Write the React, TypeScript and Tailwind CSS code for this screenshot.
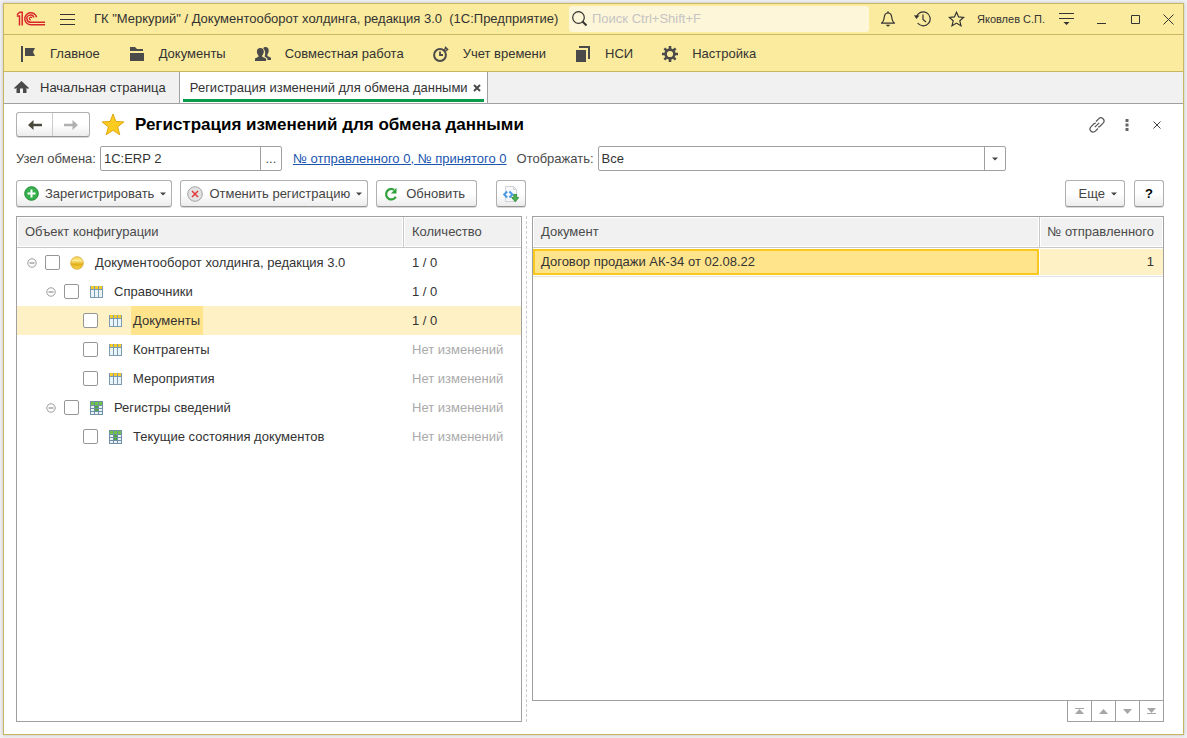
import { useState } from "react";
import type { ReactNode } from "react";

type TreeRow = {
  id: string;
  level: number;
  icon: "root" | "catalog" | "register";
  name: string;
  count: string;
};

const treeRows: TreeRow[] = [
  { id: "root", level: 0, icon: "root", name: "Документооборот холдинга, редакция 3.0", count: "1 / 0" },
  { id: "catalogs", level: 1, icon: "catalog", name: "Справочники", count: "1 / 0" },
  { id: "documents", level: 2, icon: "catalog", name: "Документы", count: "1 / 0" },
  { id: "partners", level: 2, icon: "catalog", name: "Контрагенты", count: "" },
  { id: "events", level: 2, icon: "catalog", name: "Мероприятия", count: "" },
  { id: "registers", level: 1, icon: "register", name: "Регистры сведений", count: "" },
  { id: "states", level: 2, icon: "register", name: "Текущие состояния документов", count: "" },
];

const indents = ["pl-[10px]", "pl-[29px]", "pl-[47px]"];

const buttonClass =
  "flex items-center rounded-[3px] border border-[#b0b0b0] border-b-[#959595] bg-linear-to-b from-white from-50% to-[#ececec] text-[#444] shadow-[0_1px_0_#d8d8d8]";

function Logo() {
  return (
    <svg width="30" height="16" viewBox="0 0 30 16" fill="none" stroke="#d9262c" strokeWidth="1.5">
      <path d="M.8 5H3.500v9.500M1 3.800 3.800 1.200h2.400v13.300" />
      <path d="M20.600 6.200A6 6 0 1 0 15 13.700h14" />
      <path d="M17.900 6.500a3.600 3.600 0 1 0-3.100 4.700H29" />
      <path d="M15.800 7a1.300 1.300 0 1 0-.9 1.800" strokeWidth="1.200" />
    </svg>
  );
}

function FlagIcon() {
  return (
    <svg width="16" height="16" viewBox="0 0 16 16" fill="#4a4a4a">
      <path d="M1 0h2v16H1zM5 2h10l-2 4 2 4H5z" />
    </svg>
  );
}

function FolderIcon() {
  return (
    <svg width="16" height="16" viewBox="0 0 16 16" fill="#4a4a4a">
      <path d="M1 1h5l2 2h6v2H1zM1 7h14v8H1z" />
    </svg>
  );
}

function PeopleIcon() {
  return (
    <svg width="16" height="16" viewBox="0 0 16 16" fill="#4a4a4a">
      <path d="M10.500 1c2.200 0 3.200 1.300 3.200 3.400 0 1.900-.6 3-1.300 3.900v1.600l3.600 1.800V14h-3.600v-1.800L9.600 10.500C10.600 8 10.500 4.500 8.200 2.300 8.700 1.500 9.500 1 10.500 1z" />
      <path d="M5.300 2C7.600 2 8.800 3.500 8.800 5.500c0 1.900-.8 3-1.600 3.900v1.300l3.900 1.900V15H0v-2.400l3.500-1.900V9.400C2.600 8.500 1.900 7.400 1.900 5.500 1.900 3.500 3.100 2 5.300 2z" />
    </svg>
  );
}

function TimerIcon() {
  return (
    <svg width="16" height="16" viewBox="0 0 16 16" fill="none" stroke="#4a4a4a" strokeWidth="2">
      <circle cx="7" cy="9" r="5.900" />
      <path d="M7 5.500V9h3" strokeWidth="1.800" />
      <path d="m12 .8 3.200 3.200M11 4l2.400-2.400M12.500 5.200l2-2" strokeWidth="1.400" />
    </svg>
  );
}

function BooksIcon() {
  return (
    <svg width="16" height="16" viewBox="0 0 16 16" fill="#4a4a4a">
      <path d="M1 4h10v12H1zM4 0h11v13h-2V2H4z" />
    </svg>
  );
}

function GearIcon() {
  return (
    <svg width="16" height="16" viewBox="0 0 16 16" fill="none" stroke="#4a4a4a">
      <circle cx="8" cy="8" r="4.400" strokeWidth="2.600" />
      <path d="M8 0v3M8 13v3M0 8h3M13 8h3M2.400 2.400l2 2M11.600 11.600l2 2M2.400 13.600l2-2M11.600 4.400l2-2" strokeWidth="2.600" />
    </svg>
  );
}

function HomeIcon() {
  return (
    <svg width="15" height="13" viewBox="0 0 15 13" fill="#4a4a4a">
      <path d="M7.500 0 15 7l-1 1-1.500-1.200V12H9V7.500H6V12H2.500V6.800L1 8 0 7z" />
    </svg>
  );
}

function BellIcon() {
  return (
    <svg width="16" height="16" viewBox="0 0 16 16" fill="none" stroke="#333" strokeWidth="1.200">
      <path d="M1.500 12.200c2-1.500 2.500-3 2.700-5.400C4.400 3.900 5.900 2 8 2s3.600 1.900 3.800 4.800c.2 2.400.7 3.900 2.700 5.400z" strokeLinejoin="round" />
      <path d="M8 .5V2" strokeWidth="1.600" />
      <path d="M5.500 13.800h5L8 15.800z" fill="#333" stroke="none" />
    </svg>
  );
}

function HistoryIcon() {
  return (
    <svg width="17" height="16" viewBox="0 0 17 16" fill="none" stroke="#333" strokeWidth="1.200">
      <path d="M2.500 5.800A7 7 0 1 1 3.600 12" />
      <path d="M9 3.500v5l3 2.500" />
      <path d="m0 4.300 5.500.2L2.400 8z" fill="#333" stroke="none" />
    </svg>
  );
}

function StarIcon() {
  return (
    <svg width="17" height="16" viewBox="0 0 17 16" fill="none" stroke="#333" strokeWidth="1.200">
      <path d="m8.500 1.200 2.100 4.700 5 .5-3.800 3.400 1.200 5-4.500-2.700L4 14.800l1.200-5L1.400 6.400l5-.5z" />
    </svg>
  );
}

function FavoriteIcon() {
  return (
    <svg width="24" height="23" viewBox="0 0 24 23">
      <path d="m12 1 2.900 7.500 8 .4-6.300 5 2.200 7.900-6.800-4.500-6.800 4.500 2.200-7.900-6.300-5 8-.4z" fill="#fbcb1f" stroke="#e0a910" />
    </svg>
  );
}

function ArrowIcon({ right, color }: { right?: boolean; color: string }) {
  return (
    <svg width="14" height="10" viewBox="0 0 14 10">
      <path
        d={right ? "M14 5 8.500 0v3.800H0v2.400h8.500V10z" : "M0 5 5.500 0v3.800H14v2.400H5.500V10z"}
        fill={color}
      />
    </svg>
  );
}

function PlusIcon() {
  return (
    <svg width="15" height="15" viewBox="0 0 15 15">
      <circle cx="7.500" cy="7.500" r="6.800" fill="#35b04a" stroke="#1f8a35" />
      <path d="M7.500 3.500v8M3.500 7.500h8" stroke="#fff" strokeWidth="2" />
    </svg>
  );
}

function CancelIcon() {
  return (
    <svg width="16" height="16" viewBox="0 0 16 16">
      <circle cx="8" cy="8" r="7.300" fill="#e2e2e2" stroke="#a3a3a3" />
      <path d="m5 5 6 6M11 5l-6 6" stroke="#e2383c" strokeWidth="1.500" />
    </svg>
  );
}

function RefreshIcon() {
  return (
    <svg width="14" height="14" viewBox="0 0 14 14" fill="none">
      <path d="M11.800 9.800A5.200 5.200 0 1 1 10 2.800" stroke="#2fa03a" strokeWidth="2.200" />
      <path d="M12.500.8v5.700H6.800z" fill="#2fa03a" />
    </svg>
  );
}

function ExchangeIcon() {
  return (
    <svg width="16" height="16" viewBox="0 0 16 16" fill="none">
      <path d="M2.500.5h8l3 3v12h-11z" fill="#f7f8f9" stroke="#cfd3d6" />
      <path d="M10.500.5v3h3" stroke="#cfd3d6" />
      <path d="M4.200 5.500 1.200 8.500l3 3M6.400 5.500l3 3-3 3" stroke="#4a9be6" strokeWidth="2" />
      <path d="M10.700 8.500h3v3h2.100L12.200 15.700l-3.600-4.200h2.100z" fill="#4caf50" stroke="#2e8537" strokeWidth=".8" />
    </svg>
  );
}

function LinkIcon() {
  return (
    <svg width="16" height="16" viewBox="0 0 16 16" fill="none" stroke="#555" strokeWidth="1.200">
      <path d="m7 4.500 2.600-2.700a3 3 0 0 1 4.500 4.300L11 9.200a2.900 2.900 0 0 1-2 .8" />
      <path d="m9 11.500-2.600 2.700a3 3 0 0 1-4.500-4.300L5 6.800A2.900 2.900 0 0 1 7 6" />
      <path d="m5.800 10.200 4.400-4.400" />
    </svg>
  );
}

function TreeIcon({ icon }: { icon: TreeRow["icon"] }) {
  if (icon == "root") {
    return (
      <svg width="14" height="14" viewBox="0 0 14 14">
        <defs>
          <linearGradient id="ball" x1="0" y1="0" x2="0" y2="1">
            <stop offset="0" stopColor="#f6d040" />
            <stop offset=".3" stopColor="#fdeb90" />
            <stop offset=".6" stopColor="#e3ae18" />
            <stop offset="1" stopColor="#f8da50" />
          </linearGradient>
        </defs>
        <circle cx="7" cy="7" r="6.300" fill="url(#ball)" stroke="#d6a63a" strokeWidth=".8" />
      </svg>
    );
  }
  if (icon == "catalog") {
    return (
      <svg width="13" height="12" viewBox="0 0 13 12">
        <path d="M0 0h13v12H0z" fill="#7c9ab0" />
        <path d="M1 0h3v3H1zM5 0h3v3H5zM9 0h3v3H9z" fill="#f3cc2c" />
        <path d="M1 4h3v7H1zM5 4h3v7H5zM9 4h3v7H9z" fill="#eaf4fb" />
      </svg>
    );
  }
  return (
    <svg width="13" height="14" viewBox="0 0 13 14">
      <path d="M0 0h13v14H0z" fill="#7190a5" />
      <path d="M1 1h3v3H1zM5 1h3v3H5zM9 1h3v3H9z" fill="#6cc644" />
      <path d="M1 5h3v2H1zM9 5h3v2H9zM1 8h3v2H1zM9 8h3v2H9zM1 11h3v2H1zM5 11h3v2H5zM9 11h3v2H9z" fill="#e8f2f8" />
      <path d="M5 5h3v2H5zM5 8h3v2H5z" fill="#4aa83c" />
    </svg>
  );
}

function Caret() {
  return (
    <svg width="6" height="4" viewBox="0 0 6 4">
      <path d="M0 .5h6l-3 3z" fill="#444" />
    </svg>
  );
}

const menuItems: { label: string; icon: ReactNode }[] = [
  { label: "Главное", icon: <FlagIcon /> },
  { label: "Документы", icon: <FolderIcon /> },
  { label: "Совместная работа", icon: <PeopleIcon /> },
  { label: "Учет времени", icon: <TimerIcon /> },
  { label: "НСИ", icon: <BooksIcon /> },
  { label: "Настройка", icon: <GearIcon /> },
];

const scrollButtons = [
  { label: "В начало", path: "M0 1h9v1H0zM4.500 2 9 7H0z" },
  { label: "Вверх", path: "M4.500 2 9 7H0z" },
  { label: "Вниз", path: "M0 2h9L4.500 7z" },
  { label: "В конец", path: "M0 1h9L4.500 6zM0 6h9v1H0z" },
];

function TitleBar() {
  return (
    <header className="flex h-[31px] items-center border-b border-[#c8b660] bg-[#fbeb9e] pl-3 text-[#333]">
      <Logo />
      <button aria-label="Меню" className="ml-[14px] flex h-5 w-4 flex-col justify-center gap-1">
        <span className="h-px w-[15px] bg-[#333]" />
        <span className="h-px w-[15px] bg-[#333]" />
        <span className="h-px w-[15px] bg-[#333]" />
      </button>
      <span className="ml-[18px] whitespace-pre">
        ГК "Меркурий" / Документооборот холдинга, редакция 3.0{"  "}(1С:Предприятие)
      </span>
      <label className="ml-auto flex h-[26px] w-[300px] items-center gap-1 rounded-[3px] bg-[#fef6d8] pl-[3px]">
        <svg width="16" height="16" viewBox="0 0 16 16" fill="none" stroke="#333">
          <circle cx="6.500" cy="6.500" r="5.800" strokeWidth="1.200" />
          <path d="m10.500 10.500 4 4" strokeWidth="2" />
        </svg>
        <input
          aria-label="Поиск"
          placeholder="Поиск Ctrl+Shift+F"
          className="min-w-0 flex-1 outline-none placeholder:text-[#c4c4c4]"
        />
      </label>
      <button aria-label="Уведомления" className="ml-[11px]"><BellIcon /></button>
      <button aria-label="История" className="ml-[18px]"><HistoryIcon /></button>
      <button aria-label="Избранное" className="ml-[17px]"><StarIcon /></button>
      <span className="ml-3 text-[11px]">Яковлев С.П.</span>
      <button aria-label="Настройки" className="ml-[14px]">
        <svg width="15" height="14" viewBox="0 0 15 14" fill="#333">
          <path d="M0 1h15v1H0zM0 6h15v1H0zM4.500 10h6l-3 3z" />
        </svg>
      </button>
      <button aria-label="Свернуть" className="ml-[22px]">
        <svg width="11" height="11" viewBox="0 0 11 11"><path d="M1 9h9v1H1z" fill="#333" /></svg>
      </button>
      <button aria-label="Развернуть" className="ml-6">
        <svg width="9" height="9" viewBox="0 0 9 9"><path d="M.5.5h8v8h-8z" fill="none" stroke="#333" /></svg>
      </button>
      <button aria-label="Закрыть" className="mr-[9px] ml-[23px]">
        <svg width="11" height="11" viewBox="0 0 11 11"><path d="m.5.5 10 10m0-10-10 10" stroke="#333" /></svg>
      </button>
    </header>
  );
}

function TreeTable() {
  const [checked, setChecked] = useState<string[]>([]);
  const [current, setCurrent] = useState("documents");

  const toggle = (id: string) => {
    if (checked.includes(id)) {
      setChecked(checked.filter((item) => item != id));
    } else {
      setChecked([...checked, id]);
    }
  };

  return (
    <div className="border border-[#a0a0a0]">
      <table className="w-full table-fixed border-separate border-spacing-0 text-left">
        <thead className="bg-[#f1f1f1] text-[#4a4a4a]">
          <tr className="h-[31px]">
            <th className="border-r border-b border-[#c8c8c8] pl-2 font-normal shadow-[inset_0_0_0_1px_#fff]">Объект конфигурации</th>
            <th className="w-[117px] border-b border-[#c8c8c8] pl-2 font-normal shadow-[inset_0_0_0_1px_#fff]">Количество</th>
          </tr>
        </thead>
        <tbody className="text-[#333]">
          {treeRows.map((row) => (
            <tr
              key={row.id}
              onClick={() => setCurrent(row.id)}
              className={`h-[29px] ${row.id == current ? "bg-[#fef1c5]" : ""}`}
            >
              <td>
                <div className={`flex h-[29px] items-center ${indents[row.level]}`}>
                  {row.level < 2 && (
                    <button aria-label="Свернуть" className="mr-2 w-[10px]">
                      <svg width="10" height="10" viewBox="0 0 10 10" fill="none" stroke="#999">
                        <circle cx="5" cy="5" r="4.200" />
                        <path d="M2.500 5h5" stroke="#777" />
                      </svg>
                    </button>
                  )}
                  <input
                    type="checkbox"
                    aria-label={row.name}
                    checked={checked.includes(row.id)}
                    onChange={() => toggle(row.id)}
                    className={`size-[15px] appearance-none rounded-[2px] border border-[#969696] bg-white checked:bg-[#888] ${row.level == 2 ? "ml-[19px]" : ""}`}
                  />
                  <span className="ml-[10px] flex w-[14px] justify-center">
                    <TreeIcon icon={row.icon} />
                  </span>
                  <span className={`ml-[9px] py-[7px] pr-[3px] pl-[2px] leading-[15px] ${row.id == current ? "bg-[#ffe48c]" : ""}`}>
                    {row.name}
                  </span>
                </div>
              </td>
              <td className={`pl-2 ${row.count ? "" : "text-[#aaa]"}`}>{row.count || "Нет изменений"}</td>
            </tr>
          ))}
        </tbody>
      </table>
    </div>
  );
}

function DocumentTable() {
  return (
    <div className="flex flex-col">
      <div className="flex-1 border border-[#a0a0a0]">
        <table className="w-full table-fixed border-separate border-spacing-0 text-left">
          <thead className="bg-[#f1f1f1] text-[#4a4a4a]">
            <tr className="h-[31px]">
              <th className="border-r border-b border-[#c8c8c8] pl-2 font-normal shadow-[inset_0_0_0_1px_#fff]">Документ</th>
              <th className="w-[123px] border-b border-[#c8c8c8] pr-[9px] text-right font-normal whitespace-nowrap shadow-[inset_0_0_0_1px_#fff]">№ отправленного</th>
            </tr>
          </thead>
          <tbody className="text-[#333]">
            <tr className="h-[29px]">
              <td className="border-b border-[#e4e4e4] py-px pr-px">
                <div className="flex h-[26px] items-center border-2 border-[#fcc81e] bg-[#ffe48c] pl-[6px]">
                  Договор продажи АК-34 от 02.08.22
                </div>
              </td>
              <td className="border-b border-[#e4e4e4] py-px">
                <div className="flex h-[26px] items-center justify-end bg-[#fef1c5] pr-[9px]">1</div>
              </td>
            </tr>
          </tbody>
        </table>
      </div>
      <div className="-mt-px flex self-end border border-[#a0a0a0]">
        {scrollButtons.map((button, index) => (
          <button
            key={button.label}
            aria-label={button.label}
            className={`flex h-5 items-center justify-center ${index > 0 ? "w-6 border-l border-[#a0a0a0]" : "w-[23px]"}`}
          >
            <svg width="9" height="8" viewBox="0 0 9 8"><path d={button.path} fill="#a6a6a6" /></svg>
          </button>
        ))}
      </div>
    </div>
  );
}

export default function App() {
  const [node, setNode] = useState("1С:ERP 2");

  return (
    <div className="flex min-h-screen bg-[#f0f0f3] p-[3px] font-['Liberation_Sans',Arial,sans-serif] text-[13px] leading-4">
      <div className="flex min-w-0 flex-1 flex-col border border-[#c8b660] bg-white shadow-[0_0_3px_#bbb]">
        <TitleBar />
        <nav className="flex h-[37px] items-center gap-[29px] border-b border-[#c8b660] bg-[#fbeb9e] pt-px pl-4 text-[#333]">
          {menuItems.map((item) => (
            <button key={item.label} className="flex items-center gap-[14px] whitespace-nowrap">
              {item.icon}
              {item.label}
            </button>
          ))}
        </nav>
        <div className="flex h-8 border-b border-[#a0a0a0] bg-[#f1f1f1] text-[#333]">
          <button className="flex items-center gap-[11px] border-r border-[#a0a0a0] pr-[13px] pl-[10px]">
            <HomeIcon />
            Начальная страница
          </button>
          <div className="flex border-r border-[#a0a0a0] bg-white px-[3px] pb-px">
            <div className="flex items-center gap-[5px] border-b-3 border-[#0a9a4a] pt-1 pr-[3px] pl-[7px]">
              <span>Регистрация изменений для обмена данными</span>
              <button aria-label="Закрыть вкладку">
                <svg width="8" height="8" viewBox="0 0 8 8"><path d="m1 1 6 6m0-6L1 7" stroke="#4a4a4a" strokeWidth="2" /></svg>
              </button>
            </div>
          </div>
        </div>

        <main className="flex flex-1 flex-col pt-2 pr-[19px] pb-3 pl-3">
          <div className="flex h-[25px] items-center">
            <div className={`${buttonClass} h-[25px]`}>
              <button aria-label="Назад" className="flex h-full w-9 items-center justify-center border-r border-[#ccc]">
                <ArrowIcon color="#4a473c" />
              </button>
              <button aria-label="Вперед" className="flex h-full w-9 items-center justify-center">
                <ArrowIcon right color="#b0b0b0" />
              </button>
            </div>
            <button aria-label="В избранное" className="ml-[11px]"><FavoriteIcon /></button>
            <h1 className="ml-[10px] text-[17px] leading-6 font-bold text-black">Регистрация изменений для обмена данными</h1>
            <button aria-label="Ссылка" className="ml-auto"><LinkIcon /></button>
            <button aria-label="Действия" className="ml-5">
              <svg width="4" height="12" viewBox="0 0 4 12" fill="#666"><path d="M.5 0h3v3h-3zM.5 4.500h3v3h-3zM.5 9h3v3h-3z" /></svg>
            </button>
            <button aria-label="Закрыть" className="mr-[3px] ml-6">
              <svg width="8" height="8" viewBox="0 0 8 8"><path d="m.5.5 7 7m0-7-7 7" stroke="#444" /></svg>
            </button>
          </div>

          <div className="mt-[9px] flex h-[25px] items-center text-[#4a4a4a]">
            <label htmlFor="node" className="whitespace-nowrap">Узел обмена:</label>
            <div className="ml-1 flex h-[25px] w-[182px] rounded-[2px] border border-[#a0a0a0]">
              <input
                id="node"
                value={node}
                onChange={(e) => setNode(e.target.value)}
                className="min-w-0 flex-1 pl-[3px] text-[#333] outline-none"
              />
              <button aria-label="Выбрать" className="w-[21px] border-l border-[#a0a0a0]">...</button>
            </div>
            <a href="#numbers" className="ml-[11px] whitespace-nowrap text-[#1a56b0] underline">
              № отправленного 0, № принятого 0
            </a>
            <label htmlFor="filter" className="ml-[10px] whitespace-nowrap">Отображать:</label>
            <div className="relative ml-1 h-[25px] w-full max-w-[408px]">
              <select id="filter" className="size-full appearance-none rounded-[2px] border border-[#a0a0a0] pl-[3px] text-[#333]">
                <option>Все</option>
              </select>
              <span className="pointer-events-none absolute inset-y-0 right-0 flex w-[22px] items-center justify-center border-l border-[#a0a0a0]">
                <Caret />
              </span>
            </div>
          </div>

          <div className="mt-[9px] flex h-[27px]">
            <button className={`${buttonClass} gap-[6px] pr-[5px] pl-[7px]`}>
              <PlusIcon />
              Зарегистрировать
              <Caret />
            </button>
            <button className={`${buttonClass} ml-2 gap-[6px] pr-[5px] pl-[6px]`}>
              <CancelIcon />
              Отменить регистрацию
              <Caret />
            </button>
            <button className={`${buttonClass} ml-2 gap-2 pr-[11px] pl-[7px]`}>
              <RefreshIcon />
              Обновить
            </button>
            <button aria-label="Обмен" className={`${buttonClass} ml-[19px] w-[30px] justify-center`}>
              <ExchangeIcon />
            </button>
            <button className={`${buttonClass} ml-auto gap-[6px] pr-[7px] pl-[13px]`}>
              Еще
              <Caret />
            </button>
            <button aria-label="Справка" className={`${buttonClass} ml-[9px] w-[30px] justify-center font-bold text-black`}>?</button>
          </div>

          <div className="mt-[9px] grid flex-1 grid-cols-[506fr_10px_632fr]">
            <TreeTable />
            <div className="ml-1 w-px border-l border-dashed border-[#ccc]" />
            <DocumentTable />
          </div>
        </main>
      </div>
    </div>
  );
}
